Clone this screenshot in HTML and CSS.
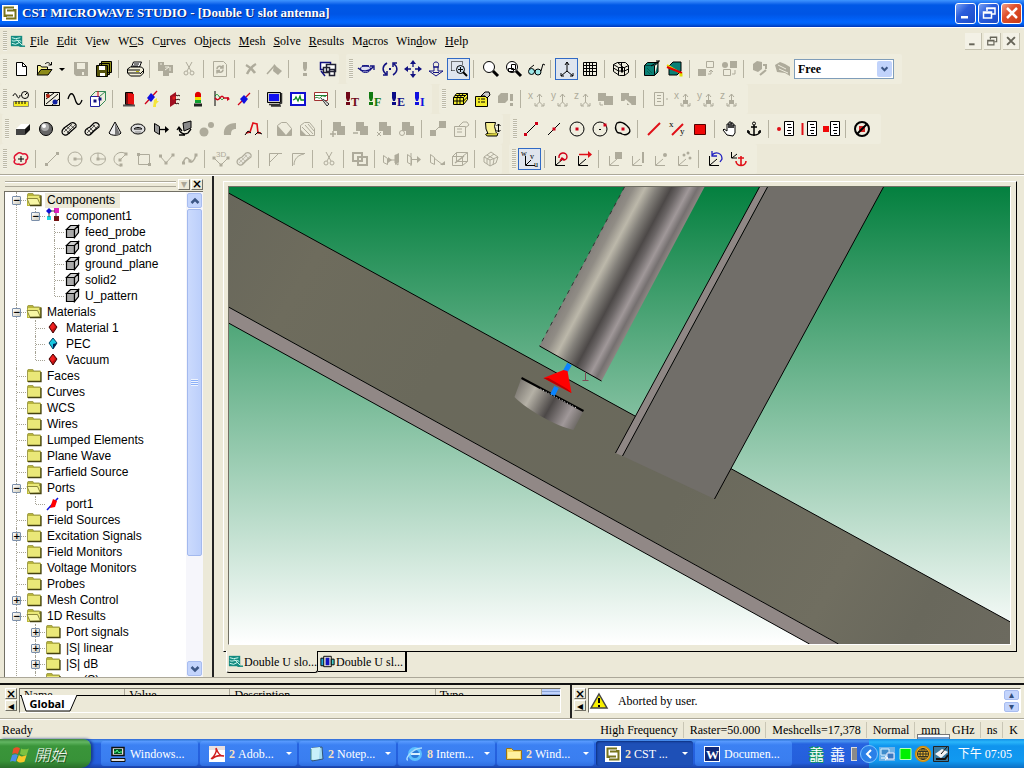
FILE: index.html
```
<!DOCTYPE html>
<html lang="zh-Hant">
<head>
  <meta charset="UTF-8">
  <title>CST MICROWAVE STUDIO - [Double U slot antenna]</title>
  <link rel="stylesheet" href="styles.css">
</head>
<body>

<header class="title-bar">
  <svg data-icon="cst"></svg>
  <h1>CST MICROWAVE STUDIO - [Double U slot antenna]</h1>
  <div class="win-buttons">
    <button aria-label="Minimize"><svg data-icon="winMin"></svg></button>
    <button aria-label="Restore"><svg data-icon="winRestore"></svg></button>
    <button class="close" aria-label="Close"><svg data-icon="winClose"></svg></button>
  </div>
</header>

<nav class="menu-bar">
  <span class="grip"></span>
  <svg data-icon="doc"></svg>
  <button><u>F</u>ile</button>
  <button><u>E</u>dit</button>
  <button>V<u>i</u>ew</button>
  <button>W<u>C</u>S</button>
  <button>C<u>u</u>rves</button>
  <button>O<u>b</u>jects</button>
  <button><u>M</u>esh</button>
  <button><u>S</u>olve</button>
  <button><u>R</u>esults</button>
  <button>M<u>a</u>cros</button>
  <button>Win<u>d</u>ow</button>
  <button><u>H</u>elp</button>
  <div class="mdi-buttons">
    <button aria-label="Minimize document"><svg data-icon="winMin"></svg></button>
    <button aria-label="Restore document"><svg data-icon="winRestore"></svg></button>
    <button aria-label="Close document"><svg data-icon="winClose"></svg></button>
  </div>
</nav>

<div class="toolbars">
  <div class="tool-row">
    <div class="toolbar" data-tools="new open drop save- saveAll | print | copy- cut- | update- | delete- sweep- | bang- windows"></div>
    <div class="toolbar" data-tools="orbit rotate pan dynZoom zoomBox* | lens lensFit glasses | axes* grid | wireCube | cutPlane section | transA- transB- | pickA- pickB-">
      <div class="combo">
        <select aria-label="Working plane"><option>Free</option></select>
        <svg data-icon="chevron"></svg>
      </div>
    </div>
  </div>
  <div class="tool-row">
    <div class="toolbar" data-tools="units | background wave boundary | door port planeWave lamp flag probe | monitor scope table | runT runF runE runI"></div>
    <div class="toolbar" data-tools="mesh meshProps meshRun- | axisX- axisY- axisZ- boolA- boolB- | list- pointX- pointY- pointZ-"></div>
  </div>
  <div class="tool-row shifted">
    <div class="toolbar" data-tools="brick sphere cylinder tube cone torus extrude rotateFace loft- shell- bondWire | chamfer- blend- | add- subtract- intersect- insert- | align- props- | history"></div>
    <div class="toolbar" data-tools="pickPoint pickMid pickCenter pickCircle pickBlob | pickEdge pickXY pickFace | hand anchor | listPoint listEdge listFace | clearPicks"></div>
  </div>
  <div class="tool-row">
    <div class="toolbar" data-tools="newCurve | line- circle- ellipse- arc- rect- polyline- spline- | poly3d- tube- | chamferCurve- blendCurve- | cut- | overlap- | trace1- trace2- trace3- cover- | solid-"></div>
    <div class="toolbar" data-tools="wcs* | wcsRotate wcsMove | wcsFace- wcsEdge- wcsPoint- wcsPoints- | wcsUndo wcsAnchor"></div>
  </div>
</div>

<main class="workspace">
  <aside class="dock">
    <div class="dock-head">
      <span class="dock-grip"></span>
      <button class="mini" disabled aria-label="Dock menu">▾</button>
      <button class="mini" aria-label="Close tree">×</button>
    </div>
    <div class="tree-box">
      <ul class="tree">
        <li>
          <div class="node"><span class="twist"><b>−</b></span><svg data-icon="folderOpen"></svg><span class="selected">Components</span></div>
          <ul>
            <li>
              <div class="node"><span class="twist"><b>−</b></span><svg data-icon="component"></svg><span>component1</span></div>
              <ul>
                <li><div class="node"><span class="twist"></span><svg data-icon="solidItem"></svg><span>feed_probe</span></div></li>
                <li><div class="node"><span class="twist"></span><svg data-icon="solidItem"></svg><span>grond_patch</span></div></li>
                <li><div class="node"><span class="twist"></span><svg data-icon="solidItem"></svg><span>ground_plane</span></div></li>
                <li><div class="node"><span class="twist"></span><svg data-icon="solidItem"></svg><span>solid2</span></div></li>
                <li><div class="node"><span class="twist"></span><svg data-icon="solidItem"></svg><span>U_pattern</span></div></li>
              </ul>
            </li>
          </ul>
        </li>
        <li>
          <div class="node"><span class="twist"><b>−</b></span><svg data-icon="folderOpen"></svg><span>Materials</span></div>
          <ul>
            <li><div class="node"><span class="twist"></span><svg data-icon="matRed"></svg><span>Material 1</span></div></li>
            <li><div class="node"><span class="twist"></span><svg data-icon="matCyan"></svg><span>PEC</span></div></li>
            <li><div class="node"><span class="twist"></span><svg data-icon="matRed"></svg><span>Vacuum</span></div></li>
          </ul>
        </li>
        <li><div class="node"><span class="twist"></span><svg data-icon="folder"></svg><span>Faces</span></div></li>
        <li><div class="node"><span class="twist"></span><svg data-icon="folder"></svg><span>Curves</span></div></li>
        <li><div class="node"><span class="twist"></span><svg data-icon="folder"></svg><span>WCS</span></div></li>
        <li><div class="node"><span class="twist"></span><svg data-icon="folder"></svg><span>Wires</span></div></li>
        <li><div class="node"><span class="twist"></span><svg data-icon="folder"></svg><span>Lumped Elements</span></div></li>
        <li><div class="node"><span class="twist"></span><svg data-icon="folder"></svg><span>Plane Wave</span></div></li>
        <li><div class="node"><span class="twist"></span><svg data-icon="folder"></svg><span>Farfield Source</span></div></li>
        <li>
          <div class="node"><span class="twist"><b>−</b></span><svg data-icon="folderOpen"></svg><span>Ports</span></div>
          <ul>
            <li><div class="node"><span class="twist"></span><svg data-icon="portItem"></svg><span>port1</span></div></li>
          </ul>
        </li>
        <li><div class="node"><span class="twist"></span><svg data-icon="folder"></svg><span>Field Sources</span></div></li>
        <li><div class="node"><span class="twist"><b>+</b></span><svg data-icon="folder"></svg><span>Excitation Signals</span></div></li>
        <li><div class="node"><span class="twist"></span><svg data-icon="folder"></svg><span>Field Monitors</span></div></li>
        <li><div class="node"><span class="twist"></span><svg data-icon="folder"></svg><span>Voltage Monitors</span></div></li>
        <li><div class="node"><span class="twist"></span><svg data-icon="folder"></svg><span>Probes</span></div></li>
        <li><div class="node"><span class="twist"><b>+</b></span><svg data-icon="folder"></svg><span>Mesh Control</span></div></li>
        <li>
          <div class="node"><span class="twist"><b>−</b></span><svg data-icon="folderOpen"></svg><span>1D Results</span></div>
          <ul>
            <li><div class="node"><span class="twist"><b>+</b></span><svg data-icon="folder"></svg><span>Port signals</span></div></li>
            <li><div class="node"><span class="twist"><b>+</b></span><svg data-icon="folder"></svg><span>|S| linear</span></div></li>
            <li><div class="node"><span class="twist"><b>+</b></span><svg data-icon="folder"></svg><span>|S| dB</span></div></li>
            <li><div class="node"><span class="twist"></span><svg data-icon="folder"></svg><span>arg(S)</span></div></li>
          </ul>
        </li>
      </ul>
      <div class="scrollbar">
        <button aria-label="Scroll up"><svg data-icon="chevronUp"></svg></button>
        <div class="track"><div class="thumb"><i></i></div></div>
        <button aria-label="Scroll down"><svg data-icon="chevron"></svg></button>
      </div>
    </div>
  </aside>

  <section class="mdi">
    <div class="view-frame">
      <svg class="scene" viewBox="228 187 782 457" preserveAspectRatio="xMidYMid slice">
        <defs>
          <linearGradient id="sky" x1="0" y1="0" x2="0" y2="1">
            <stop offset="0" stop-color="#04803f"/>
            <stop offset="1" stop-color="#fff"/>
          </linearGradient>
          <linearGradient id="plate" gradientUnits="userSpaceOnUse" x1="228" y1="190" x2="1009" y2="640">
            <stop offset="0" stop-color="#68675b"/>
            <stop offset=".12" stop-color="#6e6c5d"/>
            <stop offset=".3" stop-color="#6a695b"/>
            <stop offset=".6" stop-color="#6a695c"/>
            <stop offset=".8" stop-color="#706e60"/>
            <stop offset=".9" stop-color="#69685c"/>
            <stop offset="1" stop-color="#6c6a5f"/>
          </linearGradient>
          <linearGradient id="metal" gradientUnits="userSpaceOnUse" x1="539" y1="346" x2="601" y2="379">
            <stop offset="0" stop-color="#85807c"/>
            <stop offset=".12" stop-color="#908c85"/>
            <stop offset=".27" stop-color="#bcb8aa"/>
            <stop offset=".42" stop-color="#83807a"/>
            <stop offset=".6" stop-color="#4c4847"/>
            <stop offset=".7" stop-color="#6b6666"/>
            <stop offset=".83" stop-color="#a09899"/>
            <stop offset=".93" stop-color="#757070"/>
            <stop offset="1" stop-color="#8a8380"/>
          </linearGradient>
          <linearGradient id="disc" gradientUnits="userSpaceOnUse" x1="516" y1="384" x2="580" y2="420">
            <stop offset="0" stop-color="#77736d"/>
            <stop offset=".25" stop-color="#b5b1a6"/>
            <stop offset=".55" stop-color="#4c4847"/>
            <stop offset=".82" stop-color="#a09899"/>
            <stop offset="1" stop-color="#6b6763"/>
          </linearGradient>
        </defs>
        <rect x="228" y="187" width="782" height="457" fill="url(#sky)"/>
        <path d="M228 193 1010 622V644H838L228 307z" fill="url(#plate)"/>
        <path d="M228 307 838 644H809L228 323z" fill="#918886"/>
        <path d="M228 193 1010 622M228 307 838 644M228 323 809 644" fill="none" stroke="#000"/>
        <!-- feed cylinder -->
        <path d="M624 187H704L601 381 539 346z" fill="url(#metal)"/>
        <path d="M539 346 601 381" stroke="#000"/>
        <path d="M624 187 539 346" stroke="#333" stroke-dasharray="4 5"/>
        <!-- patch arm -->
        <path d="M759 187H767L622 456 615 453z" fill="#8f8785"/>
        <path d="M767 187H883L714 499 622 456z" fill="#716e69"/>
        <path d="M759 187 615 453M767 187 622 456M883 187 714 499" fill="none" stroke="#000"/>
        <!-- base disc and port arrow -->
        <path d="M521 378 583 411 573 430C556 426 528 411 514 397z" fill="url(#disc)"/>
        <path d="M521 378 583 411" stroke="#000" stroke-width="2"/>
        <path d="M540 389 576 408" stroke="#ddd" stroke-dasharray="1 2"/>
        <path d="M569 364 564 373M556 387 552 395" stroke="#0a84ff" stroke-width="5"/>
        <path d="M543 378 563 370 567 371 571 393z" fill="#f00"/>
        <path d="M543 378 571 393 567 389 548 378z" fill="#b00"/>
        <path d="M585 372V380M582 380.500H588" stroke="#7d4a56"/>
      </svg>
    </div>
    <div class="doc-tabs">
      <button class="doc-tab active"><svg data-icon="doc"></svg>Double U slo...</button>
      <button class="doc-tab"><svg data-icon="docB"></svg>Double U sl...</button>
    </div>
  </section>
</main>

<section class="bottom-docks">
  <div class="bottom-left">
    <div class="side-buttons">
      <button class="mini" aria-label="Close parameters">×</button>
      <button class="mini" aria-label="Collapse parameters">◂</button>
    </div>
    <div class="param-box">
      <div class="param-head"><span class="w1">Name</span><span class="w1">Value</span><span class="w2">Description</span><span class="w3">Type</span><i></i></div>
      <div class="sheet-row">
        <svg class="sheet-shape" viewBox="0 0 56 18"><path d="M0 0 5 16H49L56 0" fill="#fff" stroke="#000"/></svg>
        <button class="sheet">Global</button>
      </div>
    </div>
  </div>
  <div class="bottom-right">
    <div class="side-buttons">
      <button class="mini" aria-label="Close messages">×</button>
      <button class="mini" aria-label="Collapse messages">◂</button>
    </div>
    <div class="message-box">
      <svg data-icon="warn"></svg>
      <p>Aborted by user.</p>
      <div class="spin">
        <button aria-label="Previous message">▴</button>
        <button aria-label="Next message">▾</button>
      </div>
    </div>
  </div>
</section>

<footer class="status-bar">
  <span class="ready">Ready</span>
  <span>High Frequency</span>
  <span>Raster=50.000</span>
  <span>Meshcells=17,378</span>
  <span>Normal</span>
  <span class="boxed">mm</span>
  <span>GHz</span>
  <span>ns</span>
  <span>K</span>
</footer>

<div class="taskbar">
  <button class="start"><svg data-icon="flagXp"></svg>開始</button>
  <div class="tasks">
    <button class="task"><svg data-icon="pc"></svg><span>Windows...</span></button>
    <button class="task group"><svg data-icon="pdf"></svg><b>2</b><span>Adob...</span></button>
    <button class="task group"><svg data-icon="notepad"></svg><b>2</b><span>Notep...</span></button>
    <button class="task group"><svg data-icon="ie"></svg><b>8</b><span>Intern...</span></button>
    <button class="task group"><svg data-icon="explorer"></svg><b>2</b><span>Wind...</span></button>
    <button class="task group current"><svg data-icon="cst"></svg><b>2</b><span>CST ...</span></button>
    <button class="task"><svg data-icon="word"></svg><span>Documen...</span></button>
  </div>
  <div class="ime"><span class="green">譱</span><span>譱</span><i></i></div>
  <div class="tray">
    <button class="tray-arrow" aria-label="Show hidden icons"><svg data-icon="trayArrow"></svg></button>
    <svg data-icon="trayNet"></svg>
    <svg data-icon="trayGreen"></svg>
    <svg data-icon="trayGlobe"></svg>
    <svg data-icon="trayPen"></svg>
    <span class="clock">下午 07:05</span>
  </div>
</div>

<script src="script.js"></script>
</body>
</html>
```
FILE: styles.css
```
* {
  box-sizing: border-box;
}

body {
  margin: 0;
  height: 100vh;
  display: flex;
  flex-direction: column;
  overflow: hidden;
  background: #ece9d8;
  color: #000;
  font-family: "Liberation Serif", "Noto Sans CJK TC", serif;
  font-size: 12px;
  line-height: 16px;
}

button {
  display: flex;
  align-items: center;
  justify-content: center;
  padding: 0;
  border: none;
  background: none;
  color: inherit;
  font: inherit;
}

ul {
  list-style: none;
  margin: 0;
  padding: 0;
}

svg[data-icon] {
  width: 18px;
  height: 18px;
  flex: none;
  overflow: visible;
  fill: none;
}

/* title bar */
.title-bar {
  height: 27px;
  flex: none;
  display: flex;
  align-items: center;
  gap: 3px;
  padding: 0 2px 1px 1px;
  background: linear-gradient(#3d95ff 0, #2a7df5 2px, #0058e6 5px, #0055e5 14px, #0166ff 22px, #0160f0 24px, #0037b8 27px);
}

.title-bar h1 {
  margin: 0;
  flex: 1;
  color: #fff;
  font-size: 13px;
  font-weight: bold;
  text-shadow: 1px 1px #0a2a80;
}

.win-buttons {
  display: flex;
  gap: 2px;
}

.win-buttons button {
  width: 21px;
  height: 21px;
  color: #fff;
  border: 1px solid #fff;
  border-radius: 3px;
  background: linear-gradient(135deg, #7ba3f5, #2a5ddc 40%, #1c4bc8);
}

.win-buttons .close {
  background: linear-gradient(135deg, #f0a088, #e0502c 40%, #c83a14);
}

/* menu */
.menu-bar {
  height: 27px;
  flex: none;
  display: flex;
  align-items: center;
  padding-right: 4px;
  border-top: 1px solid #fff;
}

.menu-bar > svg[data-icon] {
  width: 17px;
  height: 17px;
}

.menu-bar > button {
  padding: 0 4px;
  display: block;
}

.mdi-buttons {
  margin-left: auto;
  display: flex;
  gap: 2px;
}

.mdi-buttons button {
  width: 17px;
  height: 17px;
  color: #666458;
  background: #f3f1e6;
  border-right: 1px solid #c5c2b0;
  border-bottom: 1px solid #c5c2b0;
}

.mdi-buttons svg[data-icon] {
  width: 14px;
  height: 14px;
}

.grip {
  width: 4px;
  height: 20px;
  margin: 0 2px 0 3px;
  flex: none;
  background: repeating-linear-gradient(#bdbaa8 0 1px, #f4f3ea 1px 2px);
}

/* tool bars */
.toolbars {
  flex: none;
  border-bottom: 1px solid #aca899;
}

.tool-row {
  display: flex;
  gap: 7px;
  height: 30px;
}

.tool-row.shifted {
  padding-left: 2px;
}

.toolbar {
  display: flex;
  align-items: center;
  background: #efedde;
  border-radius: 2px;
}

.toolbar:last-child {
  padding-right: 8px;
}

.tool {
  width: 23px;
  height: 22px;
}

.tool.drop {
  width: 14px;
}

.tool:disabled {
  color: #aeab9b;
}

.tool.checked {
  border: 1px solid #316ac5;
  background: #dfe5ee;
}

.sep {
  width: 1px;
  height: 18px;
  margin: 0 4px 0 3px;
  background: #b5b2a1;
}

.combo {
  position: relative;
  width: 100px;
}

.combo select {
  appearance: none;
  width: 100%;
  height: 20px;
  padding: 0 4px 0 3px;
  border: 1px solid #7f9db9;
  border-radius: 0;
  background: #fff;
  color: #000;
  font: bold 12px "Liberation Serif", serif;
}

.combo svg[data-icon] {
  position: absolute;
  top: 2px;
  right: 2px;
  width: 15px;
  height: 16px;
  background: #c1d3fb;
  border-radius: 2px;
  pointer-events: none;
}

/* workspace */
.workspace {
  flex: 1;
  min-height: 0;
  display: flex;
  border-top: 1px solid #fff;
  border-bottom: 1px solid #aca899;
}

.dock {
  width: 214px;
  flex: none;
  display: flex;
  flex-direction: column;
  padding: 1px 9px 0 4px;
  border-right: 2px solid #222;
}

.dock-head {
  display: flex;
  align-items: center;
  height: 14px;
  gap: 1px;
}

.dock-grip {
  flex: 1;
  height: 6px;
  margin: 0 1px;
  border: solid #aca899;
  border-width: 1px 0;
  box-shadow: inset 0 1px #fff;
}

.mini {
  width: 12px;
  height: 11px;
  background: #ece9d8;
  border: 1px solid;
  border-color: #fff #716f64 #716f64 #fff;
  color: #000;
  font: bold 12px/8px "DejaVu Sans", sans-serif;
}

.mini:disabled {
  color: #aca899;
}

.tree-box {
  flex: 1;
  min-height: 0;
  display: flex;
  background: #fff;
  border: 1px solid #716f64;
  border-width: 1px 0 0 1px;
  overflow: hidden;
}

.tree {
  flex: 1;
  min-width: 0;
  padding-left: 2px;
  font-family: "Liberation Sans", sans-serif;
}

.tree li {
  position: relative;
}

.tree li::before {
  content: "";
  position: absolute;
  left: 9px;
  top: 0;
  bottom: 0;
  border-left: 1px dotted #a5a294;
}

.tree li li:last-child::before {
  bottom: auto;
  height: 8px;
}

.tree ul {
  margin-left: 19px;
}

.node {
  display: flex;
  align-items: center;
  height: 16px;
  white-space: nowrap;
}

.node svg[data-icon] {
  margin-right: 1px;
}

.node > span:last-child {
  padding: 0 5px 0 2px;
  line-height: 15px;
}

.node .selected {
  background: #ece9d8;
}

.twist {
  position: relative;
  width: 19px;
  height: 9px;
  padding-left: 5px;
  flex: none;
}

.twist::before {
  content: "";
  position: absolute;
  left: 10px;
  right: 0;
  top: 4px;
  border-top: 1px dotted #a5a294;
}

.twist b {
  position: relative;
  display: block;
  width: 9px;
  height: 9px;
  border: 1px solid #7b8faa;
  border-radius: 1px;
  background: linear-gradient(135deg, #fff, #cfcbbb);
  font: bold 9px/7px "DejaVu Sans", sans-serif;
  text-align: center;
}

.scrollbar {
  width: 17px;
  display: flex;
  flex-direction: column;
  background: #f6f6fb;
}

.scrollbar button {
  width: 15px;
  height: 15px;
  margin: 1px;
  background: #c3d4fc;
  border: 1px solid #a8bdf0;
  border-radius: 2px;
}

.track {
  flex: 1;
}

.thumb {
  width: 15px;
  height: 77%;
  margin: 0 1px;
  display: flex;
  align-items: center;
  justify-content: center;
  border: 1px solid #a3b9ee;
  border-radius: 2px;
  background: linear-gradient(90deg, #cbdafd, #bccffb);
}

.thumb i {
  width: 7px;
  height: 7px;
  background: repeating-linear-gradient(#eef4fe 0 1px, #8cb0f8 1px 2px);
}

/* drawing window */
.mdi {
  flex: 1;
  min-width: 0;
  display: flex;
  flex-direction: column;
  padding: 5px 7px 3px 9px;
}

.view-frame {
  flex: 1;
  min-height: 0;
  display: flex;
  padding: 4px 5px 6px 4px;
  border: 1px solid;
  border-color: #fff #000 #000 #fff;
}

.scene {
  display: block;
  width: 100%;
  height: 100%;
  border: 1px solid;
  border-color: #716f64 #fff #fff #716f64;
}

.doc-tabs {
  display: flex;
  align-items: flex-start;
  padding-left: 3px;
  height: 22px;
}

.doc-tab {
  height: 20px;
  padding: 0 2px 0 1px;
  border: solid #000;
  border-width: 0 2px 1px 0;
}

.doc-tab svg[data-icon] {
  width: 17px;
  height: 17px;
}

.doc-tab.active {
  height: 22px;
  margin-top: -1px;
  padding: 0;
  background: #ece9d8;
  border-left: 1px solid #fff;
  border-right-width: 1px;
  border-radius: 0 0 3px 3px;
}

/* bottom panes */
.bottom-docks {
  height: 36px;
  flex: none;
  display: flex;
  margin-top: 5px;
  border-top: 2px solid #111;
  border-bottom: 1px solid #aca899;
}

.bottom-left {
  flex: 569;
  display: flex;
  padding: 3px 9px 5px 3px;
  border-right: 2px solid #222;
}

.bottom-right {
  flex: 458;
  display: flex;
  padding: 3px 3px 5px 0;
}

.side-buttons {
  width: 16px;
  display: flex;
  flex-direction: column;
  align-items: center;
  gap: 1px;
}

.param-box {
  flex: 1;
  min-width: 0;
  border: 1px solid;
  border-color: #716f64 #fff #fff #716f64;
}

.param-head {
  display: flex;
  height: 7px;
  overflow: hidden;
  line-height: 13px;
  border-bottom: 1px solid #000;
}

.param-head span {
  padding-left: 4px;
  border-right: 1px solid #aca899;
}

.param-head .w1 {
  flex: 104;
}

.param-head .w2 {
  flex: 208;
}

.param-head .w3 {
  flex: 105;
}

.param-head i {
  width: 18px;
  background: repeating-linear-gradient(#c1d3fb 0 2px, #8aa4d8 2px 3px);
}

.sheet-row {
  position: relative;
  height: 16px;
}

.sheet-shape {
  position: absolute;
  left: 1px;
  top: -1px;
  width: 56px;
  height: 18px;
}

.sheet {
  position: relative;
  width: 50px;
  height: 15px;
  margin-left: 2px;
  font: bold 11px "Noto Sans", sans-serif;
}

.message-box {
  flex: 1;
  display: flex;
  align-items: center;
  gap: 10px;
  padding: 0 1px;
  background: #fff;
  border: 1px solid;
  border-color: #716f64 #fff #fff #716f64;
}

.message-box p {
  flex: 1;
  margin: 0;
}

.spin {
  display: flex;
  flex-direction: column;
  gap: 2px;
}

.spin button {
  width: 15px;
  height: 10px;
  background: #c3d4fc;
  border: 1px solid #a8bdf0;
  border-radius: 2px;
  color: #34507c;
  font: 10px/8px "DejaVu Sans", sans-serif;
}

/* status line */
.status-bar {
  height: 20px;
  flex: none;
  display: flex;
  align-items: center;
  padding-right: 1px;
  border-top: 1px solid #fff;
}

.status-bar span {
  padding: 0 5px 0 6px;
  border-left: 1px solid #c9c6b5;
}

.status-bar .ready {
  flex: 1;
  padding-left: 2px;
  border: none;
}

.status-bar .ready + span {
  border: none;
}

.boxed {
  position: relative;
}

.boxed::after {
  content: "";
  position: absolute;
  left: 2px;
  right: -5px;
  top: 12px;
  height: 7px;
  border: 1px solid #777;
  border-bottom: none;
  box-shadow: inset 0 2px #fff, inset 0 4px #7c9cc8;
}

/* task bar */
.taskbar {
  position: relative;
  height: 29px;
  flex: none;
  display: flex;
  background: linear-gradient(#3168d5 0, #4a93f0 2px, #2663e0 5px, #245edb 24px, #1941a5 29px);
  color: #fff;
}

.start {
  width: 91px;
  justify-content: flex-start;
  gap: 4px;
  padding-left: 10px;
  background: linear-gradient(#3c873c 0, #62b662 3px, #3a953a 7px, #389238 22px, #2a6e2a 29px);
  border-radius: 0 8px 10px 0;
  box-shadow: 2px 0 3px #173a90;
  font: italic 300 16px "Noto Sans CJK TC", sans-serif;
  text-shadow: 1px 1px #1f4f1f;
}

.start svg[data-icon] {
  width: 20px;
  height: 20px;
}

.tasks {
  flex: 1;
  min-width: 0;
  display: flex;
  gap: 2px;
  padding: 2px 0 2px 10px;
}

.task {
  position: relative;
  flex: 0 1 97px;
  min-width: 0;
  justify-content: flex-start;
  gap: 3px;
  padding-left: 8px;
  border-radius: 3px;
  background: linear-gradient(#5a9bff, #3c81f3 4px, #3a7ef0 20px, #2f6ee0);
}

.task span {
  white-space: nowrap;
}

.task b {
  color: #f3dfc0;
}

.task.group::after {
  content: "";
  position: absolute;
  right: 5px;
  top: 11px;
  border: 3px solid transparent;
  border-top-color: #fff;
}

.task.current {
  background: #1e50b7;
  box-shadow: inset 1px 1px 2px #0d3080;
}

.ime {
  display: flex;
  align-items: center;
  gap: 6px;
  margin-right: 12px;
  font: 15px "Noto Sans CJK TC", sans-serif;
}

.ime .green {
  text-shadow: 0 0 1px #0f9a5a, 1px 1px #0f9a5a, -1px -1px #0f9a5a;
}

.ime i {
  width: 6px;
  height: 14px;
  background: #8a8a8a;
  border: 1px solid #ddd;
  border-width: 1px 0 1px 1px;
}

.tray {
  width: 155px;
  display: flex;
  align-items: center;
  padding-right: 12px;
  background: linear-gradient(#1290e8 0, #29b5fa 3px, #0f94ee 7px, #1199f0 22px, #0c6fc4 29px);
}

.tray-arrow {
  margin-left: -9px;
}

.clock {
  margin-left: auto;
  white-space: nowrap;
}
```
FILE: script.js
```
// one stroke or filled shape of an 18 x 18 icon
const p = (d, s = "currentColor", f = "none", w = 1) =>
  `<path d="${d}" stroke="${s}" fill="${f}" stroke-width="${w}"/>`;
const f = (d, c = "currentColor") => p(d, "none", c);
const c = (x, y, r, s = "currentColor", fill = "none", w = 1) =>
  `<circle cx="${x}" cy="${y}" r="${r}" stroke="${s}" fill="${fill}" stroke-width="${w}"/>`;
const t = (x, y, s, text, col = "currentColor", extra = "") =>
  `<text x="${x}" y="${y}" font-size="${s}" fill="${col}" ${extra}>${text}</text>`;

const red = "#d00018";
const navy = "#101080";
const dot = (x, y, col = red) => f(`M${x - 1.5} ${y - 1.5}h3v3h-3z`, col);
const wcsAxes = p("M3.500 6v9.500H13M4 15l7-6");
const bang = (letter, col) =>
  f("M3 2h4v6l-1 3H4L3 8zM3 12h4v3H3z", col) + t(8, 16, 12, letter, col, 'font-weight="bold"');
const axis = letter =>
  t(0, 9, 10, letter, "currentColor", 'font-family="Liberation Sans"') + p("M11.500 4v8l-4 4M11.500 12l4 4M9 7l2.500-3L14 7M7 13v3h3M13 16h3v-3");
const pointAxis = letter => axis(letter) + f("M9 10h5v4H9z");
const bool = mark => f("M4 2h8v4h4v9H8v-4H4z") + mark;
const listIcon = mark =>
  f("M9 2h9v14H9z", "#fff") + p("M8.500 1.500h9v14h-9zM11 4.500h4M12 7.500h4M11 10.500h4M12 13.500h3") + mark;
const scissors = p("M6 2l5 9M12 2L7 11") + c(6, 13, 2) + c(12, 13, 2);
const tubeShape = (d, hatch) =>
  p(d, "currentColor", "#e9e7dc", 1.2) + p(hatch, "currentColor", "none", 0.6);
const folderBack = f("M1 4l1-2h5l1 2h7v11H1z", "#b9b63a") + f("M2 5h12v9H2z", "#eae878");

const icons = {
  drop: f("M6 8h6l-3 3z"),
  chevron: p("M5.500 7L9 10.500 12.500 7", "#3c5685", "none", 2.5),
  chevronUp: p("M5.500 11L9 7.500 12.500 11", "#3c5685", "none", 2.5),
  winMin: f("M4 12h7v2.500H4z"),
  winRestore: p("M7 7V4h8v6h-3M6 4.500h9", "currentColor", "none", 1.5) + p("M3.500 8h8v6h-8zM3 9h9", "currentColor", "none", 1.5),
  winClose: p("M4 4l10 10M14 4L4 14", "currentColor", "none", 2.5),
  cst: f("M1 1h16v16H1z", "#fff") + p("M13 3.500H3.500V12H6M5 14.500h9.500V6H12", "#77741d", "none", 2) + p("M6 6.500h9M3 11.500h9", "#77741d", "none", 2),
  doc: f("M2 3h12v11H2z", "#138a80") + p("M3 5l4 1 5-1M3 8c3 2 6-2 10 1M3 11l4 1 4-2M8 7l6 6", "#d8fff4") + p("M11 14h6", "#138a80", "none", 1.5),
  docB: p("M2 5.500h4v8H2z", "#000", "#2ad") + p("M5 3.500h8v11H5z", "#000", "#ece9d8") + f("M7 5h4v8H7z", "#1414c0") + p("M13 6.500h3v6h-3z", "#000", "#4cc"),

  new: p("M4.500 2.500h6l4 4v9h-10z", "#000", "#fff") + p("M10.500 2.500v4h4"),
  open: p("M2.500 14.500v-9h3l1 1.500h6v2", "#000", "#fbf58e") + p("M2 15l4-5.500h11L13 15z", "#000", "#8c8a18") + p("M10 4c2-2 4-2 6 1M16.500 2v3h-3"),
  save: f("M2 2h14v14H4l-2-2z") + f("M5 3h8v6H5zM10 12h2v3h-2z", "#efedde"),
  saveAll: p("M6.500 1.500h10v11h-10zM4.500 3.500h10v11h-10z", "#000", "#8c8a18") + p("M1.500 5.500h11v11h-11z", "#000", "#55530c") + f("M4 6h6v4H4zM5 13h5v3H5z", "#fff"),
  print: p("M5.500 7l2-5h8l-2 5z", "#000", "#fff") + p("M8 4h5M7 6h5") + p("M1.500 9l3-2h11l2 2v4l-3 3h-10l-3-3z", "#000", "#f2efd8") + p("M2 10h12M2 13h12M14 14l3-3", "#000") + f("M10 11h3v1h-3z", "#bbb600"),
  copy: f("M1 2h6v3h9v8h-4v3H6v-5H1z") + p("M3 4h2M8 7h4l-4 3M13 7v4", "#efedde"),
  cut: scissors,
  update: p("M2.500 1.500h10l3 3v12h-13z") + p("M6 9c0-3 4-4 6-1M12 5v3H9M12 9.500c0 3-4 4-6 1M6 13.500v-3h3", "currentColor", "none", 1.5),
  delete: p("M4 5c4 2 7 5 9 8M14 4c-4 2-7 6-9 10", "currentColor", "none", 2.5),
  sweep: p("M2 14l8-9", "currentColor", "none", 1.5) + f("M9 4l3 3 5 4-4 4-5-4z"),
  bang: f("M7 2h4v6l-1 3H8L7 8zM7 13h4v3H7z"),
  windows: p("M1.500 2.500h10v7h-10z", navy, "#fff", 1.5) + p("M7.500 4.500h9v7h-9zM4.500 7.500h6v5h-6zM10.500 9.500h5v6h-5z", "#223", "#fff", 1.5) + p("M2 11l4 5", navy, "none", 1.5),

  orbit: `<ellipse cx="7.500" cy="9" rx="5" ry="3.500" stroke="${navy}" fill="#dfe0f0"/>` + p("M0 8c4 4 11 4 15-1M12 6h4v4M4 6h7", navy, "none", 1.3),
  rotate: p("M6 3C1 6 1 11 5 14M12 15c5-3 5-8 1-11M2 15h4v-4M16 3h-4v4", navy, "none", 1.5) + f("M8 8h2v2H8z", navy),
  pan: p("M9 2v5M9 11v5M2 9h5M11 9h5", navy, "none", 1.3) + f("M9 0l3 4H6zM9 18l3-4H6zM0 9l4-3v6zM18 9l-4-3v6z", navy),
  dynZoom: p("M9 2c3 0 3 3 2 5H7C6 5 6 2 9 2zM6 7h6M7 7v4M11 7v4M7 11H2l7 5 7-5h-5M6 12.500h6", navy),
  zoomBox: p("M1.500 10.500v-9h11v3M1.500 10.500h4", "#000", "none", 1).replace("/>", ' stroke-dasharray="1 1"/>') + c(10.5, 9.5, 4, "#000", "#cde") + p("M8 9.500h5M10.500 7v5") + p("M13 12l4 4", "#000", "none", 2),
  lens: c(8, 7, 5.5, "#000", "#fff") + p("M12 11l5 5", "#000", "none", 3),
  lensFit: c(8, 7, 5.5, "#000", "#fff") + p("M4.500 8.500h5v3h-5zM7.500 4.500h4v5h-4z") + p("M12 11l5 5", "#000", "none", 3),
  glasses: c(4.5, 11.5, 3, "#000", "#9fe8e8") + c(11, 12, 3, "#000", "#9fe8e8") + p("M2 9l5-4M14 11l2-7 2 1M7 11h1"),
  axes: p("M9 2v10M9 11l-6 5M9 11l6 5M7 5l2-3 2 3M3 13v3h3M12 16h3v-3"),
  grid: p("M2.500 2.500h13v13h-13zM5.500 2v14M8.500 2v14M11.500 2v14M2 5.500h14M2 8.500h14M2 11.500h14"),
  wireCube: p("M1.500 4.500l4-2h8l3 3v7l-4 3h-5l-6-4zM1.500 4.500l5 3h6l4-2M6.500 7.500v8M12.500 7.500v8M5.500 2.500l5 4v6M1.500 8l5 3h6l4-2M9.500 2.500v10"),
  cutPlane: p("M1.500 5.500h10v10h-10z", "#000", "#0b8076") + p("M1.500 5.500l3-3h11l-4 3M15 3v9l-3.500 3.500", "#000", "#0b8076") + p("M8 6l8-5M13 1h4") + p("M4 8l5 5M4 11l3 3", "#065"),
  section: p("M3 6l4-4h8v9l-4 4H3z", "#000", "#0b8076") + p("M1 5l15 9", "#e8e000", "none", 2) + p("M1 7l15 6", "#e00000", "none", 2) + dot(15, 15, "#dd0"),
  transA: p("M9.500 1.500h7v6h-7z") + f("M1 9h8v7H1z") + p("M11 14h3v-4M12 12l2-2 2 2"),
  transB: c(5, 5, 3, "none", "currentColor") + f("M10 1h7v7h-7z") + p("M3.500 9.500h7v6h-7zM12 14h3v-4"),
  pickA: f("M2 4l4-3 5 1v7l-4 3-5-2z") + p("M12 5h3v4M9 15l6-5", "currentColor", "none", 2),
  pickB: f("M1 5l5-3 5 2 5 3v9l-5-3-8-1z") + p("M4 5l8 4M5 9l9 4", "#efedde"),

  units: p("M1 6c1-3 3-3 4 0s3 2 3-1") + c(13, 5, 3.5) + p("M13 5l2-2") + p("M1.500 11.500h15v5h-15z", "#887", "#f6ee20") + p("M4 11v3M7 11v3M10 11v3M13 11v3"),
  background: p("M1.500 2.500h15v13h-15z") + p("M3 5l3-2M3 9l8-6M3 14L15 4M9 15l7-6") + c(5, 6, 2, "none", "#b02010") + c(12, 12, 2.5, "none", "#1020a0"),
  wave: p("M2 9C4 2 7 2 9 9s5 7 7 1", "#000", "none", 1.3),
  boundary: p("M1.500 6.500h9v10h-9z", "#2020a0", "#fff") + p("M1.500 6.500l5-5h10l-6 5M16.500 1.500v9l-6 6", "#385") + p("M9 1v6", red) + dot(6, 11, navy) + dot(11, 9, navy),
  door: p("M5.500 2.500h7v12h-7z", "#000", "#7b1010") + f("M8 3l6 1v11l-6-1z", "#e81010") + p("M3 15.500h12", "#555", "none", 2),
  port: p("M2 14L14 1", red, "none", 1.3) + f("M8 3l4 4-4 5-4-4z", "#1010e0") + f("M11 10l3-2v3h2l-3 3v3h-3z", "#f3e53c"),
  planeWave: f("M4 6l6-4v11l-6 4z", "#a01020") + p("M10 5c2 2 2-1 4 1M9 9c2 2 2-1 5 1M9 13c2 2 2-1 4 1", "#200") + dot(8, 8, "#e02020"),
  lamp: f("M6 4c1-3 5-3 6 0v3H6z", "#e00000") + f("M6 7h6v3H6z", "#f0e000") + f("M6 10h6v3H6z", "#10a030") + p("M5 15h8", "#222", "none", 3),
  flag: p("M3 1v15") + p("M3 6c4-6 5 8 9 2", "#0a8a20") + p("M3 8c5 6 5-6 9 0h5", red, "none", 1.3) + f("M15 7l3 2-3 2z", red),
  probe: p("M3 15L15 3", red, "none", 1.3) + f("M9 5l4 4-4 5-4-5z", "#1010e0"),
  monitor: p("M1.500 2.500h13v10h-13z", "#000", "#c8c8c8") + f("M3 4h10v7H3z", "#1010f0") + p("M15.500 3v10l-2 1M3 14.500h11M5 16h10", "#333", "none", 1.5),
  scope: p("M2 3h14v12H2z", "#1010d0", "#fff", 2) + p("M4 10l2-1 1-2 2 4 2-5 1 4h3", "#0a8a20", "none", 1.3),
  table: p("M2.500 2.500h13v8h-13z", "#a03030", "#fff") + p("M3 5.500h12M3 8c3-2 4 2 6-1s3 1 5-1", "#208030") + p("M9 8l6 8 2-2-6-5", "#333", "#ddd"),
  runT: bang("T", "#700818"),
  runF: bang("F", "#117a11"),
  runE: bang("E", "#0c0c88"),
  runI: bang("I", "#1010e0"),

  mesh: p("M2.500 7.500l3-4h11v6l-4 5h-10z", "#000", "#f3ec2c") + p("M2.500 7.500h10v7M12.500 7.500l4-4M2.500 11h10l4-4M6 7.500v7M9 7.500v7M6 7.500l3-4M9 7.500l3.500-4M4 5.500h11"),
  meshProps: p("M1.500 6.500h12v10h-12z", "#000", "#f3ec2c") + p("M4 9h2M7 9h4M4 12h2M7 12h4") + p("M7 6l4-4h4l1 3-3 3-2-2z", "#000", "#ccc"),
  meshRun: f("M1 6l3-3h7v7l-3 3H1zM13 4h3v7h-3zM13 13h3v3h-3z"),
  axisX: axis("x"), axisY: axis("y"), axisZ: axis("z"),
  boolA: f("M1 3h8v3h7v9H7v-4H1z") + p("M3 12v3h3"),
  boolB: f("M1 3h8v3h7v9H7v-4H1z") + p("M5 10l6 5", "#efedde", "none", 2),
  list: p("M3.500 2.500h9v13h-9zM6 5.500h4M6 8.500h4M6 11.500h4M15 9h2"),
  pointX: pointAxis("x"), pointY: pointAxis("y"), pointZ: pointAxis("z"),

  brick: f("M2 9h9v6H2z", "#444") + f("M2 9l5-5h9l-5 5z", "#fff") + f("M11 9l5-5v6l-5 5z", "#111"),
  sphere: c(9, 9, 6.5, "#000", "#666") + c(8, 7, 4, "none", "#aaa") + c(7, 6, 2, "none", "#fff"),
  cylinder: tubeShape("M2 12c0-2 1-3 2-4l7-5c3-1 6 1 5 4l-8 7c-2 2-6 1-6-2z", "M4 8l6 6M6 6l6 5M9 4l6 5M4 12l8-8M7 13l8-8"),
  tube: tubeShape("M2 12c0-2 1-3 3-4l2-1 4-4c3-1 6 1 5 4l-5 4-3 3c-2 2-6 1-6-2z", "M4 9l5 5M6 7l5 5M9 4l5 5M4 13l8-8M7 14l8-8"),
  cone: p("M9 2L3 13c2 3 10 3 12 0z", "#000", "#eee") + f("M9 3l5 11c-2 1-3 1-5 1z", "#777"),
  torus: `<ellipse cx="9" cy="9" rx="7" ry="5" stroke="#000" fill="#ddd"/>` + p("M5 9c1-2 7-2 8 0z", "#000", "#fff") + p("M6 12h6", "#888"),
  extrude: p("M2.500 3.500l5 3v8l-5-3z", "#000", "#999") + p("M7 9.500h8", "#000", "none", 1.3) + f("M13 6l4 3.500L13 13z"),
  rotateFace: p("M8 3l8-2v7l-7 3z", "#000", "#888") + p("M4 8c0 5 5 7 9 5l3-4M2 10l2-3 3 4M4 15h6", "#000", "none", 1.3),
  loft: c(6, 12, 4.5, "none", "currentColor") + c(13, 5, 3, "none", "currentColor"),
  shell: f("M3 15c-1-8 4-12 12-12v6c-4 0-5 2-5 6z"),
  bondWire: p("M2 13l4-1 3-9 4 1 1 9h3", "#e01018", "none", 1.6) + p("M1 15l3-4 3 2M11 15l3-3 4 2"),
  chamfer: p("M2.500 5.500l4-3h5l5 6v7h-14z") + f("M3 6l8 9H3zM16 9v6h-5z"),
  blend: p("M2.500 5.500l4-3h5l5 6v7h-14z") + p("M4 7l8 8M7 5l8 9M10 4l6 7") + f("M3 10l6 6H3z"),
  add: bool(p("M1 14h6M4 11v6", "currentColor", "none", 1.5)),
  subtract: bool(p("M1 13h5", "currentColor", "none", 1.5)),
  intersect: bool(p("M2 12l4 4M6 12l-4 4")),
  insert: bool(c(4, 13, 2.5)),
  align: f("M10 1h7v7h-7zM1 10h6v6H1z") + p("M7 10l3-3"),
  props: p("M2.500 6.500h11v10h-11zM5 9h5M5 12h5") + p("M7 6l4-4h4l2 3-4 3"),
  history: p("M2.500 2.500h10l-1 4 2 7H5L3 9z", "#000", "#f8f090") + p("M5 13.500c-4 0-2 3 1 2.500h8l1-3", "#000", "#d8d040") + p("M15.500 4v8M13.500 6l2-2 2 2M13.500 10l2 2 2-2"),

  pickPoint: p("M3 15L15 3") + dot(3.5, 14.5) + dot(14.5, 3.5),
  pickMid: p("M3 15L15 3") + dot(9, 9),
  pickCenter: c(9, 9, 7) + dot(9, 9),
  pickCircle: c(9, 9, 7) + dot(14, 5) + f("M8 9h2v1H8z"),
  pickBlob: p("M3 3c4-2 8 0 12 5 3 5-3 8-7 6-2-2-3 0-5-2C1 9 1 6 3 3z", "#000", "none", 1.3) + dot(9, 9),
  pickEdge: p("M3 15L15 3", "#e01018", "none", 2),
  pickXY: p("M4 15L15 4", "#e01018", "none", 2) + t(1, 7, 9, "x") + t(12, 14, 9, "y"),
  pickFace: p("M3.500 4.500h11v10h-11z", "#500", "#f00808"),
  hand: p("M5 15l-4-5 1-1 3 2V4h2v4-6h2v6-5h2v5-3h2v8l-2 3z", "#000", "#fff"),
  anchor: c(9, 3.5, 1.5) + p("M9 5v11M6 7h6M3 10v2c2 4 10 4 12 0v-2M2 12h3M13 12h3", "#000", "none", 1.5),
  listPoint: listIcon(c(3, 9, 2, "none", "#e01018")),
  listEdge: listIcon(p("M3.500 3v12", "#e01018", "none", 2)),
  listFace: listIcon(f("M1 6h6v6H1z", "#f00808")),
  clearPicks: c(9, 9, 7, "#000", "none", 2) + f("M6 6h6v6H6z", "#d02020") + p("M4 14L14 4", "#000", "none", 2),

  newCurve: p("M5 4c3-3 5 0 6 0 5-1 6 5 3 6 1 5-6 5-7 4-4 1-6-2-4-4-2-3 0-5 2-6z", "#e01030", "none", 1.5) + p("M9 6v6M6 9h6", "#000"),
  line: p("M3 15L15 3") + dot(3.5, 14.5, "currentColor") + dot(14.5, 3.5, "currentColor"),
  circle: c(9, 9, 7) + p("M9 9h7") + dot(9, 9, "currentColor"),
  ellipse: `<ellipse cx="9" cy="9" rx="7.500" ry="6" stroke="currentColor"/>` + p("M9 9V3M9 9h7") + dot(9, 9, "currentColor"),
  arc: p("M14 4C9 0 2 4 2 9c0 4 3 6 7 7M14 4L8 10") + dot(14, 4, "currentColor") + dot(8, 10, "currentColor") + dot(9, 15, "currentColor"),
  rect: p("M3.500 4.500h11v10h-11z") + dot(3.5, 4.5, "currentColor") + dot(14.5, 14.5, "currentColor"),
  polyline: p("M2 6l6 7 7-8") + dot(2.5, 6, "currentColor") + dot(8, 13, "currentColor") + dot(15, 5, "currentColor"),
  spline: p("M2 13c3-9 6-4 7-2s4 1 6-6", "currentColor", "none", 1.5) + dot(2.5, 13, "currentColor") + dot(9, 11, "currentColor") + dot(15, 5, "currentColor"),
  poly3d: t(4, 7, 8, "3D", "currentColor", 'font-family="Liberation Sans"') + p("M2 8l7 7 7-7") + dot(2, 8, "currentColor") + dot(9, 15, "currentColor") + dot(16, 8, "currentColor"),
  chamferCurve: p("M3.500 16v-12.500H16M4 12l8-8"),
  blendCurve: p("M3.500 16v-12.500H16M5 15c0-6 4-10 10-11"),
  overlap: p("M2 3h9v8H2zM7 7h9v8H7z", "currentColor", "none", 2),
  trace1: p("M1.500 5.500l4 3v6l-4-2zM6 10h8M13 5l3 2v8l-3-2z") + f("M6 7l4 3-4 3zM13 5l4-2v9l-4 3z"),
  trace2: p("M2.500 4.500l4 3v7l-4-2zM6 9.500h9M6 3v13") + f("M12 6l4 3.500-4 3.500z"),
  trace3: p("M2.500 4.500l4 3v7l-4-2zM6 8l9 7") + f("M12 15h5v-4z"),
  cover: p("M1.500 6.500h10v9h-10zM5.500 2.500h11v9h-11zM1.500 6.500l4-4M11.500 6.500l5-4M11.500 15.500l5-4") + p("M4 13l9-7", "currentColor", "none", 1.5),
  solid: p("M2 7l7-5 7 5-2 6-6 3-6-4zM2 7l6 3 8-3M8 10v6M5 5l7 4-1 6M12 4L5 9v5"),
  wcs: p("M4.500 6v9.500H14M5 15l5-5") + t(0, 6, 8, "w") + t(9, 9, 8, "v") + t(13, 17, 8, "u"),
  wcsRotate: wcsAxes + p("M7 8c-1-6 8-7 8-1 0 3-4 4-5 2M8 11l2-3 3 2", red, "none", 1.4),
  wcsMove: wcsAxes + p("M4 4.500h10", "#e01018", "none", 1.5) + f("M13 1l4 3.500L13 8z", "#e01018"),
  wcsFace: wcsAxes + f("M9 2h7v7H9z"),
  wcsEdge: wcsAxes + p("M14 2v11", "currentColor", "none", 2),
  wcsPoint: wcsAxes + c(13, 5, 2, "none", "currentColor"),
  wcsPoints: wcsAxes + c(13, 3, 1.5, "none", "currentColor") + c(9, 5, 1.5, "none", "currentColor") + c(15, 8, 1.5, "none", "currentColor"),
  wcsUndo: wcsAxes + p("M6 5c4-4 10-2 10 4l-2 3M6 1v5h5", "#2020c0", "none", 1.3),
  wcsAnchor: p("M2.500 2v6H8M3 8l5-4") + p("M12 6v10M9 8h6M7 11c0 6 10 6 10 0", "#e01018", "none", 1.6),

  folder: folderBack + p("M1.500 14.500V4l1-1.500h4l1 1.500h7", "#a09d52") + p("M2 14.500h13V5", "#444210", "none", 1.3),
  folderOpen: folderBack + p("M1.500 6V3.500l1-1h4l1 1.500h6v3", "#a09d52") + p("M4 14.500L1 7.500h10.500L14.500 14z", "#8b883a", "#f7f6a5") + p("M4 14.500h11V4.500", "#444210", "none", 1.3),
  component: f("M4 1l3 3-3 3-3-3z", "#1010d8") + f("M9 1h5v5H9z", "#e020c0") + f("M2 9h4v4H2z", "#20d8e0") + f("M9 9h5v5H9z", "#701010") + p("M6 4h4M4 6v4M11 6v4", "#444"),
  solidItem: p("M2.500 6.500h8v8h-8z", "#000", "#aaa", 1.2) + p("M2.500 6.500l4-4h8l-4 4zM14.500 2.500v7l-4 5v-8z", "#000", "#ccc", 1.2),
  matRed: p("M8 3l4 5-4 6-4-6z", "#400", "#c01010") + f("M8 4l2 4-3 3-2-3z", "#f02020"),
  matCyan: p("M8 3l4 5-4 6-4-6z", "#046", "#18c8e0") + f("M8 9l4-1-4 6z", "#025"),
  portItem: p("M2 15L13 3", "#1010d8", "none", 1.5) + f("M8 4l4 2-2 6-5 1z", "#f00"),
  warn: p("M9 2l8 14H1z", "#444", "#f8f000", 1.5) + p("M9 6v5M9 13v2", "#000", "none", 2),

  flagXp: f("M3 4c3-2 5-1 6 0L7 9C5 8 4 8 2 9z", "#e8502a") + f("M10 4c2 1 4 1 7 0l-2 6c-2 1-4 0-6-1z", "#7cc242") + f("M2 10c2-1 4-1 5 0l-2 6c-2-1-3-1-5 0z", "#4a8ee8") + f("M8 10c2 2 4 1 7 0l-2 6c-3 1-5 1-7-1z", "#f8c828"),
  pc: p("M3 2.500h12v8H3z", "#111", "#ddd", 1.5) + f("M5 4h8v5H5z", "#052") + p("M5 7h2l1-2 2 3 1-1h2", "#5f8") + p("M2 13.500h14v3H2z", "#111", "#ddd"),
  pdf: f("M1 1h16v16H1z", "#fff") + f("M1 1h16v4H1z", "#e8e0e0") + p("M3 14C7 11 9 6 8 3c2 6 4 8 8 8-5-1-9 0-12 3", "#d02020", "none", 1.5),
  notepad: p("M5 3l10-1 1 12-11 2z", "#357", "#9fd8ee") + f("M4 3l9-1-1 12-8 1z", "#c8f0fa") + p("M4 4v11", "#488"),
  ie: c(9, 9, 5.5, "#5cc0ff", "#2a7ad8", 3) + p("M5 9h9", "#d8f0ff", "none", 2) + p("M2 15C-2 15 6 3 16 3", "#a8dcff", "none", 1.5),
  explorer: p("M1.500 14.500v-11h5l2 2h8v9z", "#9a7416", "#f6da6a") + f("M3 7h12v6H3z", "#fff1a0"),
  word: f("M1 1h16v16H1z", "#fff") + f("M2 2h14v14H2z", "#102878") + t(3, 14, 13, "W", "#fff", 'font-weight="bold"'),
  trayArrow: c(9, 9, 8.5, "#7cc4ff", "#2a80e8") + p("M11 5L7 9l4 4", "#fff", "none", 2),
  trayNet: f("M1 2h16v14H1z", "#6fb2e6") + p("M3 4h8v6H3z", "#d8efff", "#3f8ccc") + p("M9 8h7v6H9z", "#eef", "#3a78c0") + p("M3 13h6M7 11l3 2-3 2", "#fff"),
  trayGreen: p("M4 3.500h11v11H4z", "#b8ffb8", "#00f000"),
  trayGlobe: c(9, 9, 7.5, "#c98a10", "#f3b830", 1.5) + c(9, 9, 5.5, "#332") + p("M9 3v12M3 9h12M4 6.500h10M4 11.500h10M9 3c-4 4-4 8 0 12M9 3c4 4 4 8 0 12", "#332"),
  trayPen: p("M1.500 1.500h15v15h-15z", "#222", "#397aa0") + f("M3 9l7-5 6 3-7 6z", "#f2f2f2") + p("M4 14h9l3-4", "#111", "none", 2) + p("M9 9l6-7", "#111")
};

function drawIcon(svg) {
  svg.setAttribute("viewBox", "0 0 18 18");
  svg.setAttribute("aria-hidden", "true");
  svg.innerHTML = icons[svg.dataset.icon];
}

// "name-" is a disabled tool, "name*" a checked one, "|" a separator
function buildToolbar(bar) {
  let html = '<span class="grip"></span>';
  bar.dataset.tools.split(" ").forEach(token => {
    if (token === "|") {
      html += '<span class="sep"></span>';
      return;
    }
    const name = token.replace(/[-*]$/, "");
    const off = token.endsWith("-") ? " disabled" : "";
    const cls = token.endsWith("*") ? " checked" : name === "drop" ? " drop" : "";
    html += `<button class="tool${cls}" aria-label="${name}"${off}><svg data-icon="${name}"></svg></button>`;
  });
  bar.insertAdjacentHTML("afterbegin", html);
}

document.querySelectorAll("[data-tools]").forEach(buildToolbar);
document.querySelectorAll("svg[data-icon]").forEach(drawIcon);
```
